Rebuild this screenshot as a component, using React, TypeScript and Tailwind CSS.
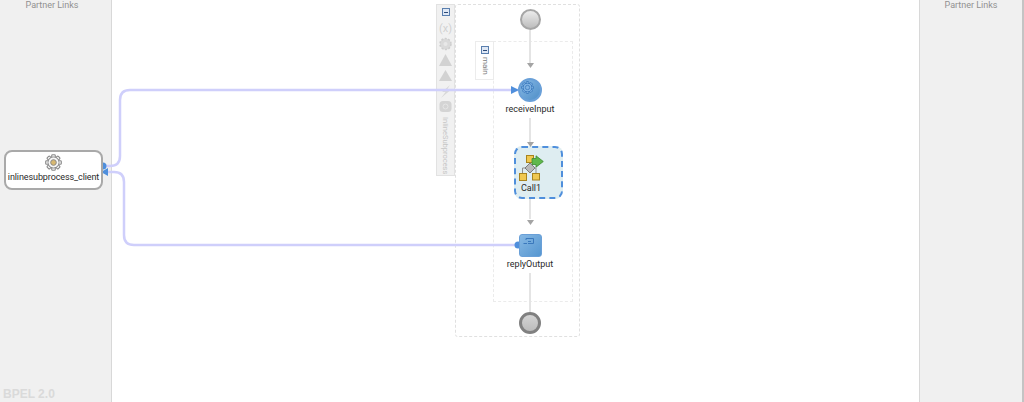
import React from "react";

const font = "font-['Roboto','Liberation_Sans',Arial,sans-serif]";

function GearIcon({ size, color, fill, core }: { size: number; color: string; fill: string; core: string }) {
  const teeth = [0, 45, 90, 135, 180, 225, 270, 315];
  return (
    <svg width={size} height={size} viewBox="0 0 24 24">
      {teeth.map((a) => (
        <rect key={a} x="9.5" y="1" width="5" height="6" rx="1.2" fill={fill} stroke={color} strokeWidth="1.6" transform={`rotate(${a} 12 12)`} />
      ))}
      <circle cx="12" cy="12" r="7.6" fill={fill} stroke={color} strokeWidth="1.6" />
      <circle cx="12" cy="12" r="7" fill={fill} />
      <circle cx="12" cy="12" r="4" fill={core} stroke={color} strokeWidth="1.4" />
    </svg>
  );
}

function CollapseBox() {
  return (
    <div className="flex h-[8px] w-[8px] shrink-0 items-center justify-center border border-[#5a7fae] bg-[#dfe8f5]">
      <div className="h-[1px] w-[4px] bg-[#2c4a78]" />
    </div>
  );
}

function Label({ className, children }: { className?: string; children: React.ReactNode }) {
  return (
    <div className={`h-[11px] whitespace-nowrap text-center text-[9px] leading-[11px] text-[#2a2a2a] ${className ?? ""}`}>
      {children}
    </div>
  );
}

function Arrowhead({ className }: { className: string }) {
  return (
    <svg className={`relative block shrink-0 ${className}`} width="7" height="5" viewBox="0 0 7 5">
      <path d="M0 0H7L3.5 5Z" fill="#a4a4a4" />
    </svg>
  );
}

function FlowLine({ className }: { className: string }) {
  return <div className={`w-[2px] shrink-0 bg-[#e4e4e4] ${className}`} />;
}

function SideIcons() {
  return (
    <svg width="15" height="92" viewBox="0 0 15 92">
      <text x="7.5" y="12" textAnchor="middle" fontSize="11" fill="#d2d2d2" fontFamily="Roboto">(x)</text>
      <circle cx="7.5" cy="24" r="5.5" fill="#dadada" />
      <circle cx="7.5" cy="24" r="5.5" fill="none" stroke="#cecece" strokeWidth="1.5" strokeDasharray="2 1.5" />
      <circle cx="7.5" cy="24" r="2" fill="#e8e8e8" />
      <path d="M7.5 34L14 46H1Z" fill="#d2d2d2" />
      <path d="M7.5 50L14 61H1Z" fill="#d2d2d2" />
      <path d="M12 65L4 72H7.5L3 78L12 70.5H8.5Z" fill="#d8d8d8" />
      <rect x="1.5" y="81" width="12" height="11" rx="3.5" fill="#d4d4d4" />
      <circle cx="7.5" cy="86.5" r="2.5" fill="none" stroke="#e6e6e6" />
    </svg>
  );
}

function CallIcon() {
  return (
    <svg width="25" height="26" viewBox="0 0 25 26">
      <path d="M6.5 13H3.5V19M15 13H17V19" fill="none" stroke="#8f8f8f" />
      <rect x="7.5" y=".5" width="7" height="7" fill="#f0c850" stroke="#a8841f" />
      <path d="M13 3.5H17V.8L24.3 6.5L17 12.2V9.5H13Z" fill="#5fb84c" stroke="#3d8a30" strokeWidth=".8" />
      <path d="M11 8L16 13L11 18L6 13Z" fill="#b9b9b9" stroke="#7d7d7d" />
      <rect x=".5" y="18.5" width="7" height="7" fill="#f0c850" stroke="#a8841f" />
      <rect x="13.5" y="18.5" width="7" height="6.5" fill="#f0c850" stroke="#a8841f" />
    </svg>
  );
}

export default function App() {
  return (
    <div className={`relative flex h-[402px] w-[1024px] overflow-hidden bg-white ${font}`}>
      {/* left partner lane */}
      <aside className="flex w-[112px] shrink-0 flex-col justify-between border-r border-[#d8d8d8] bg-[#f0f0f0]">
        <div className="mt-[-1px] pr-[7px] text-center text-[9px] leading-[12px] text-[#919191]">Partner Links</div>
        <div className="mb-[1px] ml-[3px] text-left font-['Liberation_Sans',sans-serif] text-[12px] font-bold leading-[14px] text-[#dadada]">
          BPEL 2.0
        </div>
      </aside>

      <main className="flex-1" />

      {/* right partner lane */}
      <aside className="w-[105px] shrink-0 border-l border-r-[2px] border-l-[#d8d8d8] border-r-[#c4c4c4] bg-[#f0f0f0] text-center">
        <div className="mt-[-1px] text-[9px] leading-[12px] text-[#919191]">Partner Links</div>
      </aside>

      {/* process frames */}
      <div className="absolute left-[436px] top-[4px] flex items-start">
        <div className="flex h-[172px] w-[19px] flex-col items-center border border-[#e2e2e2] bg-[#f1f1f1] pt-[3px]">
          <CollapseBox />
          <div className="mt-[4px] h-[92px] shrink-0">
            <SideIcons />
          </div>
          <div className="mt-[5px] text-[7.5px] leading-[11px] text-[#c6c6c6] [writing-mode:vertical-rl]">
            InlineSubprocess
          </div>
        </div>
        <div className="flex h-[333px] w-[125px] items-start rounded-[3px] border border-dashed border-[#e0e0e0] pl-[19px] pt-[36px]">
          <div className="flex h-[39px] w-[19px] shrink-0 flex-col items-center border border-[#ececec] bg-white pt-[4px]">
            <CollapseBox />
            <div className="mt-[3px] text-[8px] leading-[10px] text-[#808080] [writing-mode:vertical-rl]">main</div>
          </div>
          <div className="ml-[-1px] h-[261px] w-[80px] shrink-0 border border-dashed border-[#ebebeb]" />
        </div>
      </div>

      {/* partner wires */}
      <svg className="absolute left-0 top-0" width="1024" height="402" viewBox="0 0 1024 402">
        <path d="M106 166H110Q120 166 120 156V100Q120 90 130 90H518" fill="none" stroke="#cfcffb" strokeWidth="2.5" />
        <path d="M108 172H114Q124 172 124 182V235Q124 245 134 245H518" fill="none" stroke="#cfcffb" strokeWidth="2.5" />
        <path d="M511 86L519 90L511 94Z" fill="#4f8fdc" />
        <circle cx="518" cy="245" r="3.5" fill="#4f8fdc" />
        <circle cx="103" cy="166" r="3.5" fill="#4f8fdc" />
        <path d="M108 168V176L101 172Z" fill="#4f8fdc" />
      </svg>

      {/* activity sequence */}
      <div className="absolute left-[500px] top-[9px] flex w-[60px] flex-col items-center">
        <div className="h-[21px] w-[21px] shrink-0 rounded-full border-[2px] border-[#a6a6a6] bg-gradient-to-b from-[#ececec] to-[#bdbdbd]" />
        <FlowLine className="h-[33px]" />
        <Arrowhead className="" />
        <div className="mt-[10px] flex h-[24px] w-[24px] shrink-0 items-center justify-center rounded-full border-[2px] border-[#6aa0d8] bg-gradient-to-br from-[#86b8e4] to-[#4f8fc8]">
          <div className="mb-[6px] mr-[6px] flex">
            <GearIcon size={13} color="#3a78bc" fill="#7fb2e2" core="#7fb2e2" />
          </div>
        </div>
        <Label className="mt-[2px]">receiveInput</Label>
        <FlowLine className="mt-[3px] h-[24px]" />
        <Arrowhead className="z-10" />
        <div className="ml-[17px] mt-[-1px] flex h-[53px] w-[49px] shrink-0 flex-col items-start rounded-[8px] border-[2px] border-dashed border-[#4f8fdc] bg-[#deedf1] pl-[3px] pt-[7px]">
          <CallIcon />
          <Label className="mt-[2px] w-[24px]">Call1</Label>
        </div>
        <FlowLine className="h-[20px]" />
        <Arrowhead className="mt-[1px]" />
        <div className="mt-[9px] flex h-[23px] w-[23px] shrink-0 items-start rounded-[3px] border border-[#6aa0d8] bg-gradient-to-br from-[#86b8e4] to-[#5596d0] pl-[3px] pt-[3px]">
          <svg width="11" height="9" viewBox="0 0 11 9">
            <path d="M3 .5H10.5V5.5H5M3 .5V2M.5 5.5H4" fill="none" stroke="#3a78bc" />
            <path d="M5 3.5H8" stroke="#3a78bc" />
          </svg>
        </div>
        <Label className="mt-[2px]">replyOutput</Label>
        <FlowLine className="mt-[3px] h-[39px]" />
        <div className="h-[22px] w-[22px] shrink-0 rounded-full border-[3px] border-[#808080] bg-gradient-to-b from-[#d4d4d4] to-[#bcbcbc]" />
      </div>

      {/* client partner link */}
      <div className="absolute left-[4px] top-[150px] flex h-[40px] w-[99px] flex-col items-center rounded-[8px] border-[2px] border-[#a9a9a9] bg-white pt-[2px]">
        <GearIcon size={17} color="#8a8a8a" fill="#f6f6f6" core="#d8b870" />
        <Label className="mt-[1px] text-[8.5px] tracking-[-0.1px]">inlinesubprocess_client</Label>
      </div>
    </div>
  );
}
